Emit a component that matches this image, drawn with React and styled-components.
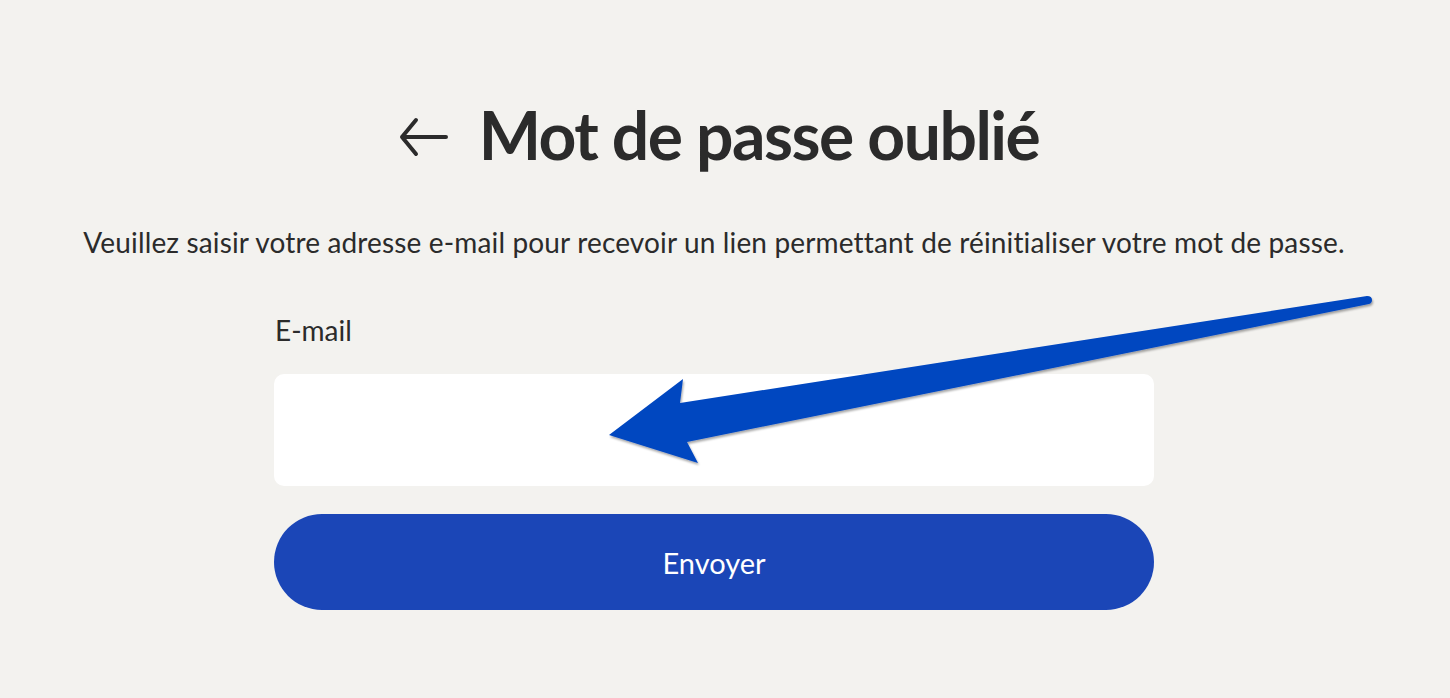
import styled, { createGlobalStyle } from 'styled-components'

const GlobalStyle = createGlobalStyle`
  html, body {
    margin: 0;
    background: #f3f2ef;
  }
  body {
    font-family: Lato, "Noto Sans", sans-serif;
    color: #2b2b2b;
  }
`

const Page = styled.div`
  position: relative;
  min-height: 698px;
  display: flex;
  flex-direction: column;
  align-items: center;
  padding: 91px 22px 0 0;
  box-sizing: border-box;
`

const Title = styled.h1`
  display: flex;
  align-items: center;
  gap: 30px;
  margin: 0 0 0 10px;
  font-size: 66px;
  font-weight: 700;
  line-height: 88px;
  letter-spacing: -1.5px;
  color: #2b2b2b;
`

const BackIcon = styled.svg`
  width: 50px;
  height: 40px;
  flex: none;
  margin-top: 4px;
`

const Intro = styled.p`
  margin: 45px 0 0;
  font-size: 28px;
  line-height: 36px;
  letter-spacing: 0.15px;
  color: #2b2b2b;
`

const Form = styled.form`
  width: 880px;
  margin-top: 53px;
  display: flex;
  flex-direction: column;
`

const Label = styled.label`
  font-size: 28px;
  line-height: 34px;
  margin-bottom: 27px;
  padding-left: 1px;
`

const Input = styled.input`
  height: 112px;
  border: none;
  border-radius: 10px;
  background: #fff;
  padding: 0 24px;
  font-size: 24px;
  font-family: inherit;
  outline: none;
  box-sizing: border-box;
`

const Submit = styled.button`
  margin-top: 28px;
  height: 96px;
  border: none;
  border-radius: 48px;
  background: #1b46b7;
  color: #fff;
  font-family: inherit;
  font-size: 29px;
  cursor: pointer;
`

const Annotation = styled.svg`
  position: absolute;
  left: 0;
  top: 0;
  width: 1450px;
  height: 698px;
  pointer-events: none;
`

export default function App() {
  return (
    <>
      <GlobalStyle />
      <Page>
        <Title>
          <BackIcon viewBox="0 0 50 40" fill="none" stroke="#2b2b2b" strokeWidth="4" strokeLinecap="round" strokeLinejoin="round">
            <path d="M47 20H3M17 3L3 20l14 17" />
          </BackIcon>
          Mot de passe oublié
        </Title>
        <Intro>
          Veuillez saisir votre adresse e-mail pour recevoir un lien permettant de réinitialiser votre mot de passe.
        </Intro>
        <Form onSubmit={(e) => e.preventDefault()}>
          <Label htmlFor="email">E-mail</Label>
          <Input id="email" type="email" />
          <Submit type="submit">Envoyer</Submit>
        </Form>
        <Annotation viewBox="0 0 1450 698">
          <defs>
            <filter id="shadow" x="-5%" y="-20%" width="110%" height="140%">
              <feDropShadow dx="1" dy="2" stdDeviation="1.2" floodColor="#000" floodOpacity="0.35" />
            </filter>
          </defs>
          <path
            filter="url(#shadow)"
            fill="#0047c0"
            d="M609 435 L683 379 L680 403 L1367 296 Q1372 296 1372 300 Q1372 303 1369 304 L687 442 L698 463 Z"
          />
        </Annotation>
      </Page>
    </>
  )
}
